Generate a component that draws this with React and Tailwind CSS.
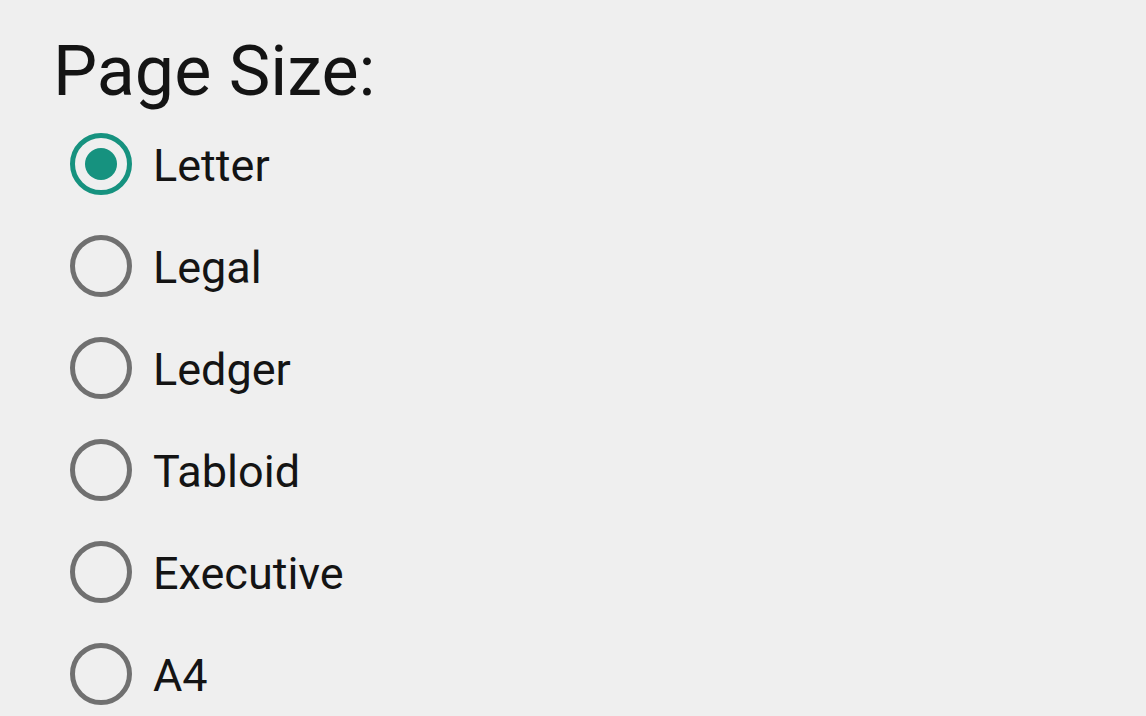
const sizes = ["Letter", "Legal", "Ledger", "Tabloid", "Executive", "A4"];

function Radio({ checked }) {
  return (
    <span
      className={
        checked
          ? "flex h-[62px] w-[62px] shrink-0 items-center justify-center rounded-full border-[5px] border-[#16927f]"
          : "flex h-[62px] w-[62px] shrink-0 items-center justify-center rounded-full border-[5px] border-[#707070]"
      }
    >
      {checked && <span className="h-[32px] w-[32px] rounded-full bg-[#16927f]" />}
    </span>
  );
}

export default function App() {
  return (
    <div
      className="h-[716px] w-[1146px] overflow-hidden bg-[#efefef] pl-[53px] pt-[30px] text-[#141414]"
      style={{ fontFamily: "Roboto, 'Liberation Sans', sans-serif" }}
    >
      <h1 className="h-[83px] text-[70px] leading-[82px] font-normal">Page Size:</h1>
      <div className="flex flex-col pl-[17px]">
        {sizes.map((s, i) => (
          <label key={s} className="flex h-[102px] items-center gap-[21px]">
            <Radio checked={i === 0} />
            <span className="text-[45px] leading-[54px] translate-y-[2px]">{s}</span>
          </label>
        ))}
      </div>
    </div>
  );
}
